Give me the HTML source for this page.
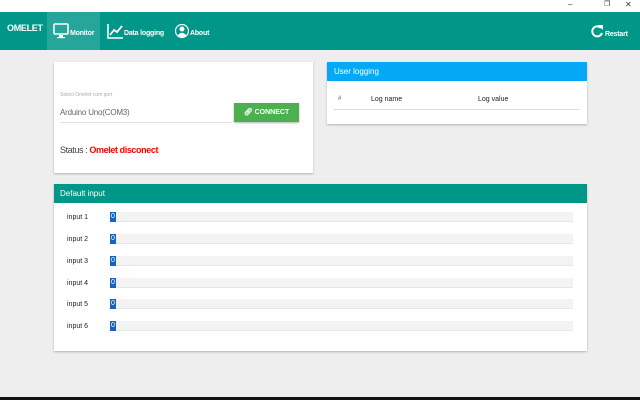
<!DOCTYPE html><html><head><style>
*{margin:0;padding:0;box-sizing:border-box}
body{width:640px;height:400px;background:#eee;font-family:"Liberation Sans",sans-serif;position:relative;overflow:hidden}
.abs{position:absolute}
.top{left:0;top:0;width:640px;height:12px;background:#fff}
.hdr{left:0;top:12px;width:640px;height:38px;background:#009688;color:#fff;font-weight:bold}
.card{background:#fff;box-shadow:0 1px 2px rgba(0,0,0,.25)}
.lbl{font-size:7px;left:67px;color:#222}
.bar{left:110px;width:463px;height:10px;background:#f3f3f3;border-bottom:1px solid #e6e6e6}
.bar span{display:block;width:6px;height:10px;background:#1565c0;color:#fff;font-size:7px;line-height:10px;text-align:center}
</style></head><body>
<div class="abs top"><span class="abs" style="left:568px;top:0;font-size:8px;color:#333">–</span><span class="abs" style="left:604px;top:0;font-size:7px;color:#333">❐</span><span class="abs" style="left:625px;top:0;font-size:8px;color:#333">✕</span></div>
<div class="abs hdr">
<div class="abs" style="left:7px;top:11px;font-size:9px;letter-spacing:-0.3px">OMELET</div>
<div class="abs" style="left:47px;top:0;width:53px;height:38px;background:#26a69a"></div>
<svg class="abs" style="left:53px;top:11px" width="16" height="16" viewBox="0 0 16 16"><rect x="1" y="1" width="14" height="10" rx="1" fill="none" stroke="#fff" stroke-width="1.5"/><rect x="6" y="12" width="4" height="2" fill="#fff"/><rect x="4" y="14" width="8" height="1.2" fill="#fff"/></svg>
<div class="abs" style="left:70px;top:18px;font-size:7px;letter-spacing:-0.2px">Monitor</div>
<svg class="abs" style="left:107px;top:12px" width="16" height="15" viewBox="0 0 16 15"><path d="M1 0V14H16" fill="none" stroke="#fff" stroke-width="1.5"/><path d="M3 11L7 6L10 8L15 2" fill="none" stroke="#fff" stroke-width="1.8"/></svg>
<div class="abs" style="left:124px;top:18px;font-size:7px;letter-spacing:-0.2px">Data logging</div>
<svg class="abs" style="left:175px;top:11px" width="14" height="16" viewBox="0 0 14 16"><circle cx="7" cy="8" r="6.5" fill="none" stroke="#fff" stroke-width="1.2"/><circle cx="7" cy="6" r="2.5" fill="#fff"/><path d="M2.5 12.5Q7 7 11.5 12.5Q7 15.5 2.5 12.5Z" fill="#fff"/></svg>
<div class="abs" style="left:190px;top:18px;font-size:7px;letter-spacing:-0.2px">About</div>
<svg class="abs" style="left:590px;top:12px" width="14" height="14" viewBox="0 0 14 14"><path d="M11 4A5 5 0 1 0 12 9" fill="none" stroke="#fff" stroke-width="2"/><path d="M8 1L13 1L13 6Z" fill="#fff"/></svg>
<div class="abs" style="left:605px;top:19px;font-size:7px;letter-spacing:-0.2px">Restart</div>
</div>
<div class="abs card" style="left:54px;top:62px;width:259px;height:111px">
<div class="abs" style="left:6px;top:30px;font-size:5px;color:#aaa">Select Omelet com port</div>
<div class="abs" style="left:6px;top:46px;font-size:8px;color:#666;letter-spacing:-0.2px">Arduino Uno(COM3)</div>
<div class="abs" style="left:6px;top:60px;width:172px;height:1px;background:#e0e0e0"></div>
<div class="abs" style="left:180px;top:41px;width:65px;height:19px;background:#4caf50;color:#fff;font-size:7px;font-weight:bold;line-height:19px;text-align:center;box-shadow:0 1px 2px rgba(0,0,0,.3)">&#x1F517;&#xFE0E; CONNECT</div>
<div class="abs" style="left:6px;top:83px;font-size:9px;color:#444;letter-spacing:-0.4px">Status : <b style="color:#f00">Omelet disconect</b></div>
</div>
<div class="abs card" style="left:327px;top:62px;width:260px;height:62px">
<div class="abs" style="left:0;top:0;width:260px;height:19px;background:#03a9f4;color:#fff;font-size:8px;line-height:19px;padding-left:7px">User logging</div>
<div class="abs" style="left:11px;top:34px;font-size:6px;color:#555">#</div>
<div class="abs" style="left:44px;top:34px;font-size:7px;color:#222">Log name</div>
<div class="abs" style="left:151px;top:34px;font-size:7px;color:#222">Log value</div>
<div class="abs" style="left:7px;top:47px;width:246px;height:1px;background:#ddd"></div>
</div>
<div class="abs card" style="left:54px;top:184px;width:533px;height:167px">
<div class="abs" style="left:0;top:0;width:533px;height:19px;background:#009688;color:#fff;font-size:8px;line-height:19px;padding-left:6px">Default input</div>
</div>
<div class="abs lbl" style="top:214px">input 1</div><div class="abs bar" style="top:212px"><span>0</span></div>
<div class="abs lbl" style="top:236px">input 2</div><div class="abs bar" style="top:234px"><span>0</span></div>
<div class="abs lbl" style="top:258px">input 3</div><div class="abs bar" style="top:256px"><span>0</span></div>
<div class="abs lbl" style="top:280px">input 4</div><div class="abs bar" style="top:278px"><span>0</span></div>
<div class="abs lbl" style="top:301px">input 5</div><div class="abs bar" style="top:299px"><span>0</span></div>
<div class="abs lbl" style="top:323px">input 6</div><div class="abs bar" style="top:321px"><span>0</span></div>
<div class="abs" style="left:0;top:397px;width:640px;height:3px;background:#111"></div>
</body></html>
